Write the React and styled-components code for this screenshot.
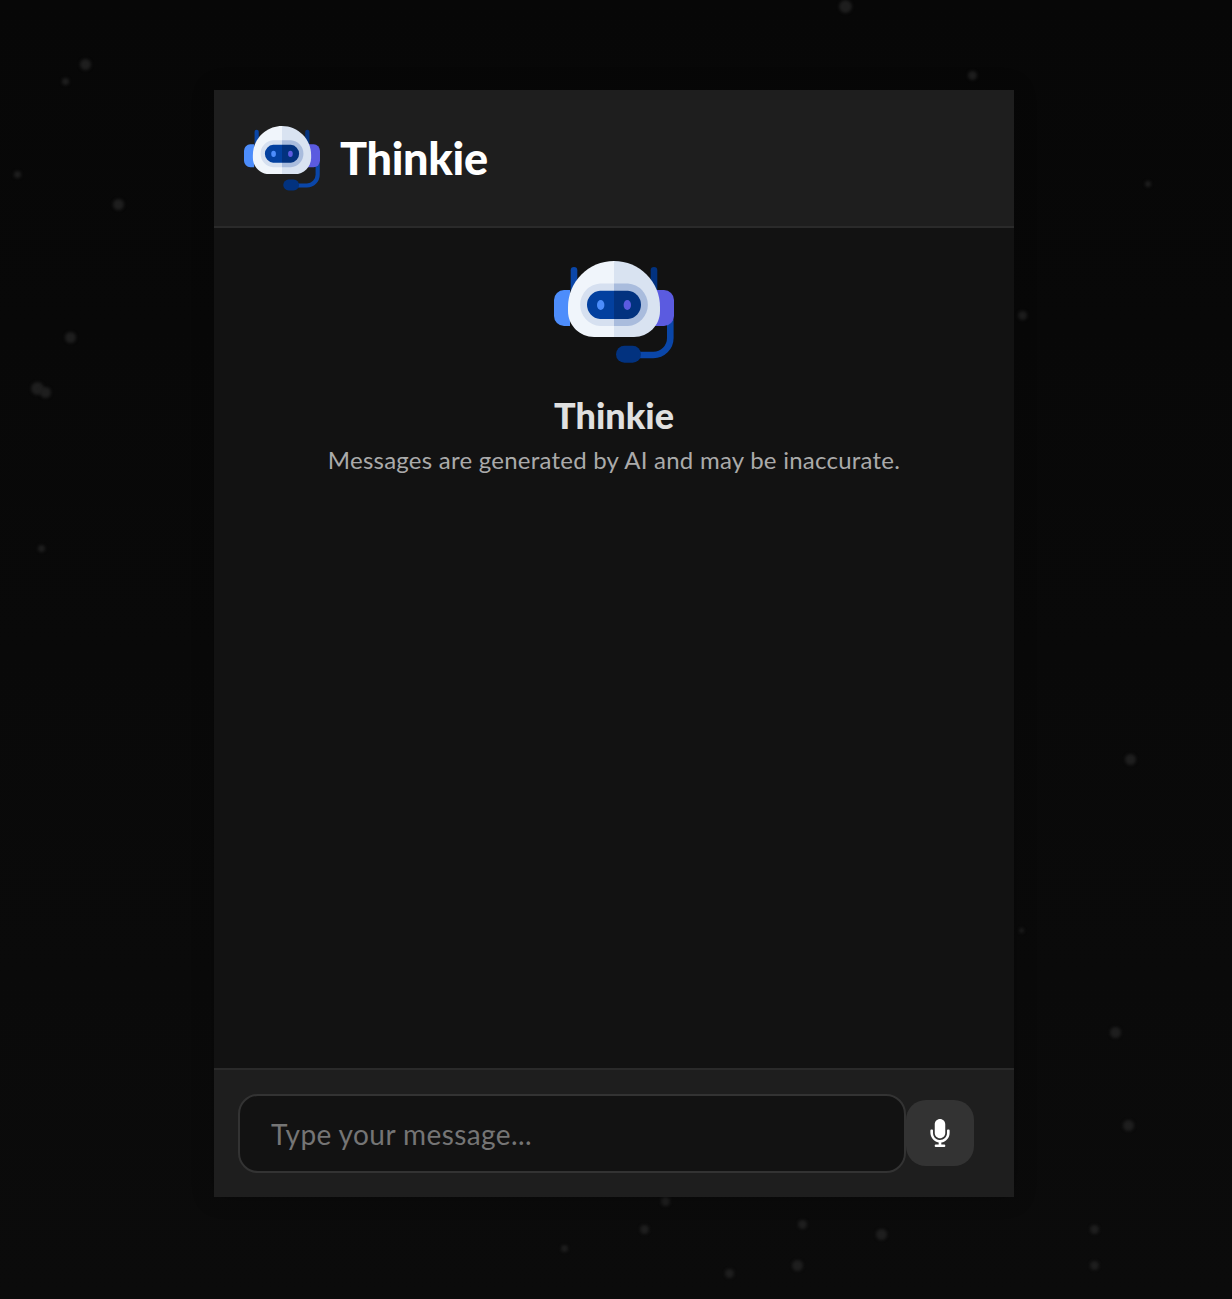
import React from "react";
import styled, { createGlobalStyle } from "styled-components";
import { FaMicrophone } from "react-icons/fa";

const FONT = `Lato, "Noto Sans", "Liberation Sans", sans-serif`;

const Global = createGlobalStyle`
  html, body { margin: 0; padding: 0; background: #080808; }
  #root { min-height: 100vh; }
  * { box-sizing: border-box; }
`;

const Stage = styled.main`
  position: relative;
  height: 1299px;
  overflow: hidden;
  display: flex;
  justify-content: center;
  align-items: flex-start;
  padding: 90px 4px 0 0;
  background: linear-gradient(180deg, #070707 0%, #090909 50%, #0b0b0b 100%);
  font-family: ${FONT};
`;

const Dot = styled.span`
  position: absolute;
  left: ${(p) => p.$x - p.$r - 0.5}px;
  top: ${(p) => p.$y - p.$r - 0.5}px;
  width: ${(p) => p.$r * 2 + 1}px;
  height: ${(p) => p.$r * 2 + 1}px;
  border-radius: 50%;
  background: #1e1e1e;
  filter: blur(1.5px);
`;

const Panel = styled.section`
  position: relative;
  width: 800px;
  height: 1107px;
  display: flex;
  flex-direction: column;
  background: #121212;
  box-shadow: 0 0 20px rgba(0, 0, 0, 0.25);
`;

const Header = styled.header`
  height: 138px;
  flex: none;
  display: flex;
  align-items: center;
  gap: 20px;
  padding: 0 30px 2px;
  background: #1e1e1e;
  border-bottom: 2px solid #2a2a2a;
`;

const Brand = styled.h1`
  margin: 2px 0 0;
  font-size: 45px;
  line-height: 1;
  font-weight: 900;
  color: #ffffff;
  letter-spacing: -0.3px;
`;

const Conversation = styled.div`
  flex: 1;
  display: flex;
  flex-direction: column;
  align-items: center;
  padding-top: 22px;
`;

const BotName = styled.h2`
  margin: 23px 0 0;
  font-size: 36px;
  line-height: 44px;
  font-weight: 900;
  color: #e0e0e0;
  letter-spacing: 0;
`;

const Notice = styled.p`
  margin: 6px 0 0;
  font-size: 24px;
  line-height: 34px;
  color: #aaaaaa;
  letter-spacing: 0.24px;
`;

const Footer = styled.footer`
  height: 129px;
  flex: none;
  display: flex;
  align-items: center;
  padding: 0 40px 0 24px;
  background: #1e1e1e;
  border-top: 2px solid #2a2a2a;
`;

const MessageInput = styled.input`
  flex: 1;
  min-width: 0;
  height: 79px;
  padding: 0 30px 0 31px;
  border: 2px solid #333333;
  border-radius: 20px;
  background: #121212;
  color: #ffffff;
  font-family: ${FONT};
  font-size: 28px;
  letter-spacing: 0.42px;
  outline: none;
  &::placeholder { color: #757575; opacity: 1; }
`;

const MicButton = styled.button`
  flex: none;
  width: 68px;
  height: 66px;
  margin-bottom: 1px;
  display: flex;
  align-items: center;
  justify-content: center;
  padding: 0;
  border: 0;
  border-radius: 20px;
  background: #333333;
  color: #ffffff;
  font-size: 28px;
`;

const LogoSvg = styled.svg`
  flex: none;
  display: block;
  width: ${(p) => p.$size}px;
  height: ${(p) => p.$size}px;
`;

function Robot({ size }) {
  return (
    <LogoSvg $size={size} viewBox="0 0 120 120" aria-hidden="true">
      <rect x="16.7" y="17" width="6.6" height="28" rx="3.3" fill="#0a46a8" />
      <rect x="96.7" y="17" width="6.6" height="28" rx="3.3" fill="#02327f" />
      <path d="M116.3 70 V88 A17 17 0 0 1 99.3 105 H80" fill="none" stroke="#0a46a8" strokeWidth="6.6" />
      <path d="M20 40 H16 V76 H10 A10 10 0 0 1 0 66 V50 A10 10 0 0 1 10 40 Z" fill="#4d8dfb" />
      <path d="M100 40 H110 A10 10 0 0 1 120 50 V66 A10 10 0 0 1 110 76 H100 Z" fill="#5b5be0" />
      <path d="M60 11 C34.6 11 14 31.6 14 57 V61 C14 75.4 25.6 87 40 87 H60 Z" fill="#f0f5fb" />
      <path d="M60 11 C85.4 11 106 31.6 106 57 V61 C106 75.4 94.4 87 80 87 H60 Z" fill="#d9e3f1" />
      <path d="M60 33.5 H46 A21.3 21.3 0 0 0 46 76 H60 Z" fill="#d6e0f0" />
      <path d="M60 33.5 H74 A21.3 21.3 0 0 1 74 76 H60 Z" fill="#a9bcdd" />
      <path d="M60 40.7 H46 A14.2 14.2 0 0 0 46 69 H60 Z" fill="#03409f" />
      <path d="M60 40.7 H74 A14.2 14.2 0 0 1 74 69 H60 Z" fill="#02327f" />
      <ellipse cx="46.7" cy="55" rx="3.7" ry="5" fill="#4d8dfb" />
      <ellipse cx="73.3" cy="55" rx="3.7" ry="5" fill="#5b5be0" />
      <rect x="62" y="95.7" width="25" height="17" rx="8.5" fill="#02327f" />
    </LogoSvg>
  );
}

const DOTS = [
  [845, 6, 6], [972, 75, 4], [85, 64, 5], [65, 81, 3], [17, 174, 3], [118, 204, 5],
  [70, 337, 5], [37, 388, 6], [45, 392, 5], [41, 548, 3], [1022, 315, 4], [1148, 184, 2.5],
  [1130, 759, 5], [1021, 930, 2], [1115, 1032, 5], [1128, 1125, 5], [665, 1201, 4],
  [644, 1229, 4], [802, 1224, 4], [881, 1234, 5], [1094, 1229, 4], [564, 1248, 3],
  [729, 1273, 4], [797, 1265, 5], [1094, 1265, 4],
];

export default function App() {
  return (
    <Stage>
      <Global />
      {DOTS.map(([x, y, r]) => (
        <Dot key={`${x}-${y}`} $x={x} $y={y} $r={r} />
      ))}
      <Panel>
        <Header>
          <Robot size={76} />
          <Brand>Thinkie</Brand>
        </Header>
        <Conversation>
          <Robot size={120} />
          <BotName>Thinkie</BotName>
          <Notice>Messages are generated by AI and may be inaccurate.</Notice>
        </Conversation>
        <Footer>
          <MessageInput placeholder="Type your message..." />
          <MicButton aria-label="Voice input">
            <FaMicrophone />
          </MicButton>
        </Footer>
      </Panel>
    </Stage>
  );
}
